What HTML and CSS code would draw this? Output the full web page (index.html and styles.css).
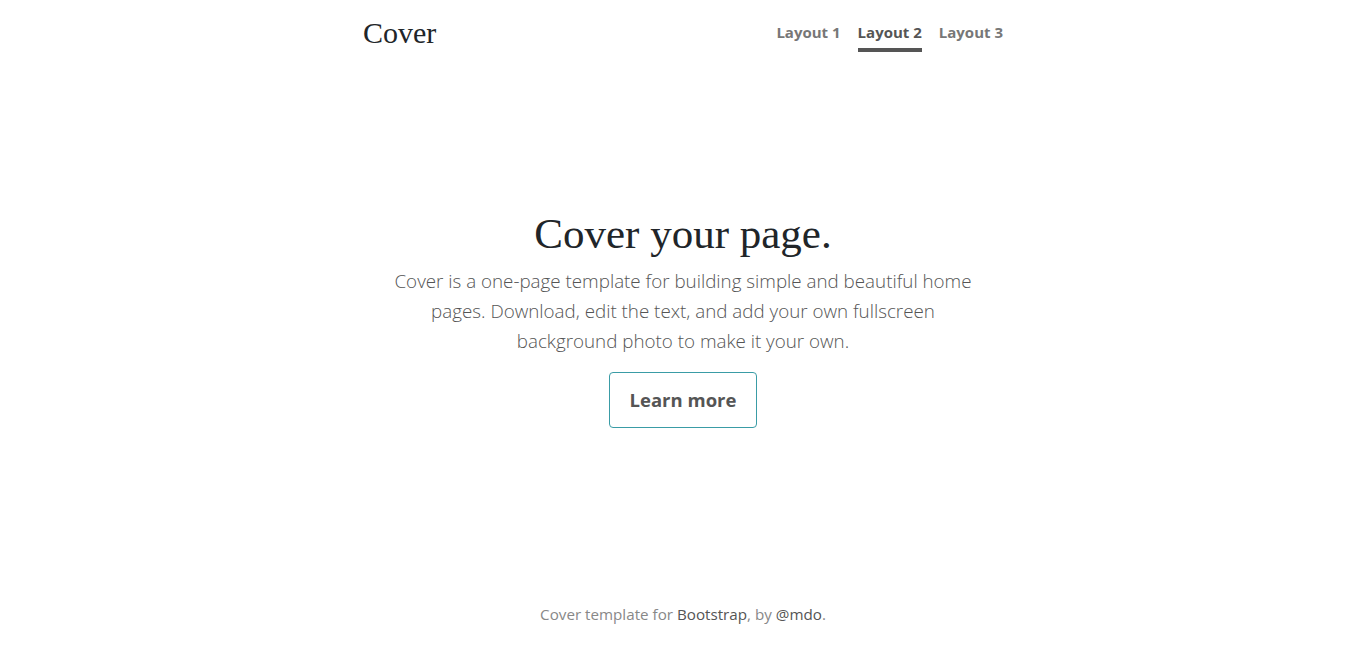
FILE: index.html
```html
<!DOCTYPE html>
<html lang="en">
<head>
<meta charset="utf-8">
<title>Cover</title>
<link rel="stylesheet" href="styles.css">
</head>
<body>
<div class="cover">
  <header class="masthead">
    <h3 class="brand">Cover</h3>
    <nav class="nav">
      <a class="nav-link" href="#">Layout 1</a>
      <a class="nav-link active" href="#">Layout 2</a>
      <a class="nav-link" href="#">Layout 3</a>
    </nav>
  </header>
  <main class="hero">
    <h1 class="title">Cover your page.</h1>
    <p class="lead">Cover is a one-page template for building simple and beautiful home pages. Download, edit the text, and add your own fullscreen background photo to make it your own.</p>
    <a class="btn" href="#">Learn more</a>
  </main>
  <footer class="mastfoot">
    <p>Cover template for <a href="#">Bootstrap</a>, by <a href="#">@mdo</a>.</p>
  </footer>
</div>
</body>
</html>
```
FILE: styles.css
```css
* { box-sizing: border-box; }
html, body { height: 100%; }
body {
  margin: 0;
  background: #fff;
  color: #555;
  font-family: "Open Sans", "Noto Sans", sans-serif;
}
a { text-decoration: none; }
.cover {
  max-width: 672px;
  height: 100%;
  margin: 0 auto;
  padding: 16px;
  display: flex;
  flex-direction: column;
}
.masthead {
  display: flex;
  justify-content: space-between;
  align-items: flex-start;
}
.brand {
  margin: 0;
  font-family: "Liberation Serif", "DejaVu Serif", serif;
  font-weight: 400;
  font-size: 30px;
  line-height: 33px;
  color: #212529;
}
.nav { display: flex; gap: 17px; }
.nav-link {
  display: block;
  padding: 4px 0 4px;
  border-bottom: 4px solid transparent;
  font-size: 15px;
  line-height: 24px;
  font-weight: 700;
  color: #777;
}
.nav-link.active { color: #555; border-bottom-color: #555; }
.hero {
  margin: auto 0;
  text-align: center;
  padding-bottom: 17px;
}
.title {
  margin: 0 0 8px;
  font-family: "Liberation Serif", "DejaVu Serif", serif;
  font-weight: 400;
  font-size: 43px;
  line-height: 48px;
  color: #212529;
}
.lead {
  margin: 0 auto 16px;
  max-width: 600px;
  font-size: 18.8px;
  line-height: 30px;
  font-weight: 300;
  color: #555;
}
.btn {
  display: inline-block;
  padding: 12px 20px;
  font-size: 18.5px;
  line-height: 30px;
  font-weight: 700;
  color: #555;
  border: 1px solid #3a9ca6;
  border-radius: 4px;
}
.mastfoot { text-align: center; }
.mastfoot p {
  margin: 0 0 16px;
  font-size: 15.2px;
  line-height: 22px;
  font-weight: 400;
  color: #888;
}
.mastfoot a { color: #555; }
```
